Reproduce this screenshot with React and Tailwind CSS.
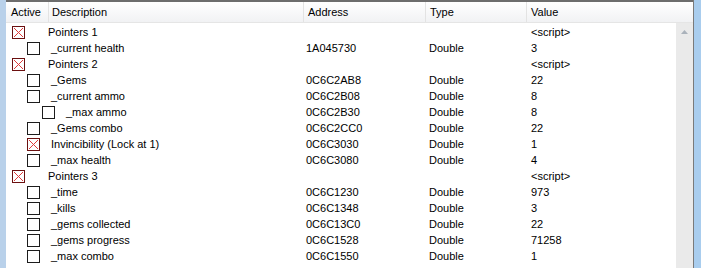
const rows = [
  { level: 0, checked: true, desc: 'Pointers 1', addr: '', type: '', value: '<script>' },
  { level: 1, checked: false, desc: '_current health', addr: '1A045730', type: 'Double', value: '3' },
  { level: 0, checked: true, desc: 'Pointers 2', addr: '', type: '', value: '<script>' },
  { level: 1, checked: false, desc: '_Gems', addr: '0C6C2AB8', type: 'Double', value: '22' },
  { level: 1, checked: false, desc: '_current ammo', addr: '0C6C2B08', type: 'Double', value: '8' },
  { level: 2, checked: false, desc: '_max ammo', addr: '0C6C2B30', type: 'Double', value: '8' },
  { level: 1, checked: false, desc: '_Gems combo', addr: '0C6C2CC0', type: 'Double', value: '22' },
  { level: 1, checked: true, desc: 'Invincibility (Lock at 1)', addr: '0C6C3030', type: 'Double', value: '1' },
  { level: 1, checked: false, desc: '_max health', addr: '0C6C3080', type: 'Double', value: '4' },
  { level: 0, checked: true, desc: 'Pointers 3', addr: '', type: '', value: '<script>' },
  { level: 1, checked: false, desc: '_time', addr: '0C6C1230', type: 'Double', value: '973' },
  { level: 1, checked: false, desc: '_kills', addr: '0C6C1348', type: 'Double', value: '3' },
  { level: 1, checked: false, desc: '_gems collected', addr: '0C6C13C0', type: 'Double', value: '22' },
  { level: 1, checked: false, desc: '_gems progress', addr: '0C6C1528', type: 'Double', value: '71258' },
  { level: 1, checked: false, desc: '_max combo', addr: '0C6C1550', type: 'Double', value: '1' },
]

const CheckBox = ({ checked }) => (
  <svg width="13" height="13" viewBox="0 0 13 13" className="shrink-0" aria-hidden>
    <rect x="0.5" y="0.5" width="12" height="12" fill="#fff" stroke={checked ? '#6b1010' : '#1c1c1c'} />
    {checked && (
      <path d="M2 2L11 11M11 2L2 11" stroke="#e03a3a" strokeWidth="1" />
    )}
  </svg>
)

const indent = {
  0: { box: 'pl-[6px]', text: 'ml-[23px]' },
  1: { box: 'pl-[21px]', text: 'ml-[11px]' },
  2: { box: 'pl-[36px]', text: 'ml-[11px]' },
}

export default function App() {
  return (
    <div
      className="flex h-[268px] w-[701px] overflow-hidden bg-white text-[11px] text-black"
      style={{ fontFamily: '"Liberation Sans", Arial, sans-serif' }}
    >
      <div className="w-[6px] shrink-0 bg-[#b9d1ea]" />
      <div className="flex flex-1 flex-col border-t-2 border-[#6d6d6d]">
        <div className="flex h-[21px] shrink-0 items-center border-b border-[#e5e5e5] bg-gradient-to-b from-white to-[#f1f2f4]">
          <div className="flex h-full w-[43px] items-center border-r border-[#e3e3e3] pl-[5px]">Active</div>
          <div className="flex h-full w-[255px] items-center border-r border-[#e3e3e3] pl-[3px]">Description</div>
          <div className="flex h-full w-[122px] items-center border-r border-[#e3e3e3] pl-[4px]">Address</div>
          <div className="flex h-full w-[101px] items-center border-r border-[#e3e3e3] pl-[4px]">Type</div>
          <div className="flex h-full flex-1 items-center pl-[4px]">Value</div>
        </div>
        <div className="flex flex-1">
          <div className="flex w-[670px] flex-col pt-px">
            {rows.map((r, i) => (
              <div key={i} className="flex h-[16px] items-center">
                <div className={`flex w-[298px] items-center ${indent[r.level].box}`}>
                  <CheckBox checked={r.checked} />
                  <span className={indent[r.level].text}>{r.desc}</span>
                </div>
                <div className="w-[122px] pl-[2px]">{r.addr}</div>
                <div className="w-[101px] pl-[3px]">{r.type}</div>
                <div className="flex-1 pl-[4px]">{r.value}</div>
              </div>
            ))}
          </div>
          <div className="flex w-[17px] justify-center bg-[#eaeaea] pt-[7px]">
            <svg width="7" height="4" viewBox="0 0 7 4" aria-hidden>
              <path d="M3.5 0L7 4H0z" fill="#aab2bb" />
            </svg>
          </div>
        </div>
      </div>
      <div className="w-px shrink-0 bg-[#7a7a7a]" />
      <div className="w-[7px] shrink-0 bg-[#a9cdee]" />
    </div>
  )
}
